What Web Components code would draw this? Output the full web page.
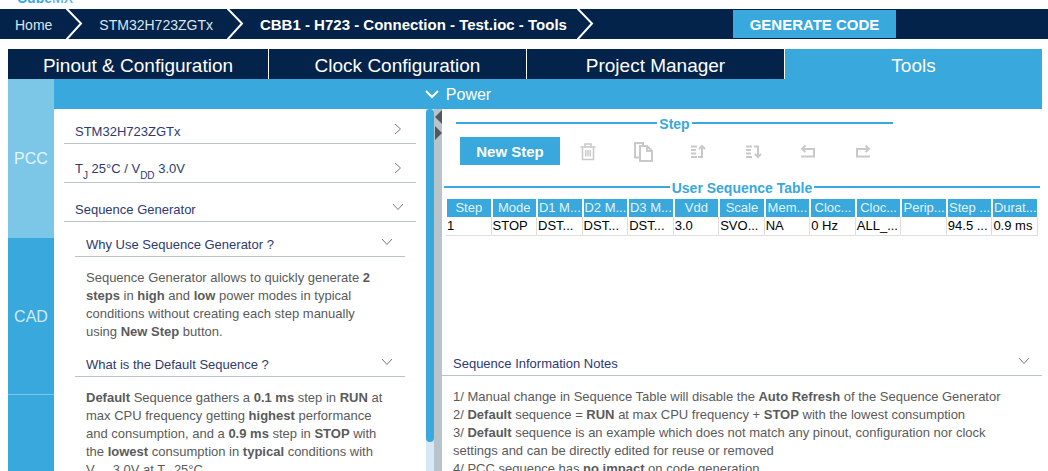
<!DOCTYPE html>
<html lang="en">
<head>
<meta charset="utf-8">
<title>CBB1 - H723 - Connection - Test.ioc - Tools</title>
<style>
  html, body { margin: 0; height: 100%; }
  body {
    --blue: #38a8dd;
    --light: #7cc7e8;
    --navy: #03234b;
    --line: #b9c4ca;
    --ink: #2d3a70;
    overflow: hidden;
    background: #fff;
    color: #5a5a5c;
    font: 13px/18px "Liberation Sans", Arial, sans-serif;
  }
  sub { font-size: 10px; line-height: 8px; vertical-align: -6px; }
</style>
</head>
<body>
<cube-app>
  <cube-brand slot="top"></cube-brand>
  <crumb-bar slot="top">
    <crumb-item>Home</crumb-item>
    <crumb-item>STM32H723ZGTx</crumb-item>
    <crumb-item current>CBB1 - H723 - Connection - Test.ioc - Tools</crumb-item>
    <generate-button slot="action">GENERATE CODE</generate-button>
  </crumb-bar>
  <tab-strip slot="tabs">
    <tab-item>Pinout &amp; Configuration</tab-item>
    <tab-item>Clock Configuration</tab-item>
    <tab-item>Project Manager</tab-item>
    <tab-item selected>Tools</tab-item>
  </tab-strip>
  <side-nav slot="side">
    <side-item selected>PCC</side-item>
    <side-item>CAD</side-item>
    <side-item></side-item>
  </side-nav>
  <power-bar slot="bar">Power</power-bar>
  <scroll-pane slot="left">
    <fold-item class="first"><span slot="title">STM32H723ZGTx</span></fold-item>
    <fold-item><span slot="title">T<sub>J</sub> 25°C / V<sub>DD</sub> 3.0V</span></fold-item>
    <fold-item open>
      <span slot="title">Sequence Generator</span>
      <fold-item open nested>
        <span slot="title">Why Use Sequence Generator ?</span>
        <text-block>Sequence Generator allows to quickly generate <b>2</b><br><b>steps</b> in <b>high</b> and <b>low</b> power modes in typical<br>conditions without creating each step manually<br>using <b>New Step</b> button.</text-block>
      </fold-item>
      <fold-item open nested>
        <span slot="title">What is the Default Sequence ?</span>
        <text-block><b>Default</b> Sequence gathers a <b>0.1 ms</b> step in <b>RUN</b> at<br>max CPU frequency getting <b>highest</b> performance<br>and consumption, and a <b>0.9 ms</b> step in <b>STOP</b> with<br>the <b>lowest</b> consumption in <b>typical</b> conditions with<br>V<sub>DD</sub> 3.0V at T<sub>J</sub> 25°C.</text-block>
      </fold-item>
    </fold-item>
  </scroll-pane>
  <split-bar slot="split"></split-bar>
  <step-panel slot="right"></step-panel>
  <rule-title slot="right">User Sequence Table</rule-title>
  <sequence-table slot="right"></sequence-table>
  <fold-item slot="right" open wide>
    <span slot="title">Sequence Information Notes</span>
    <text-block>1/ Manual change in Sequence Table will disable the <b>Auto Refresh</b> of the Sequence Generator<br>2/ <b>Default</b> sequence = <b>RUN</b> at max CPU frequency + <b>STOP</b> with the lowest consumption<br>3/ <b>Default</b> sequence is an example which does not match any pinout, configuration nor clock<br>settings and can be directly edited for reuse or removed<br>4/ PCC sequence has <b>no impact</b> on code generation</text-block>
  </fold-item>
</cube-app>

<script>
const define = (name, css, html, setup) => {
  const template = document.createElement('template');
  template.innerHTML = `<style>*{box-sizing:border-box}button{margin:0;padding:0;border:0;background:none;color:inherit;font:inherit;cursor:pointer}${css}</style>${html}`;
  customElements.define(name, class extends HTMLElement {
    constructor() {
      super();
      this.attachShadow({ mode: 'open' }).append(template.content.cloneNode(true));
    }
    connectedCallback() { if (setup) setup(this, this.shadowRoot); }
  });
};

define('cube-app', `
  :host { display: flex; flex-direction: column; height: 100vh; }
  .work { flex: 1; min-height: 0; display: flex; flex-direction: column; margin: 10px 6px 0 8px; }
  .body { flex: 1; min-height: 0; display: grid; grid-template: 30px minmax(0, 1fr) / 46px minmax(0, 372px) 8px 8px minmax(0, 606fr); }
  .side { grid-row: 1 / 3; display: grid; overflow: hidden; background: var(--blue); }
  .bar { grid-column: 2 / 6; display: grid; }
  .left { grid-column: 2 / 4; display: grid; min-height: 0; }
  .split { display: grid; }
  .right { min-width: 0; overflow: hidden; display: flex; flex-direction: column; }
  ::slotted(rule-title) { margin: 14px 2px 0; }
  ::slotted(sequence-table) { margin: 2px 4px 0 4px; height: 154px; flex: none; }`,
  `<slot name="top"></slot>
   <main class="work"><slot name="tabs"></slot>
     <div class="body">
       <div class="side"><slot name="side"></slot></div>
       <div class="bar"><slot name="bar"></slot></div>
       <div class="left"><slot name="left"></slot></div>
       <div class="split"><slot name="split"></slot></div>
       <div class="right"><slot name="right"></slot></div>
     </div>
   </main>`);

define('cube-brand', `
  :host { display: flex; flex: none; align-items: flex-end; height: 9px; overflow: hidden; padding: 0 17px; color: var(--blue); }
  span { font-size: 14px; line-height: 16px; padding-bottom: 3px; }`,
  `<span><b>Cube</b>MX</span>`);

define('crumb-bar', `
  :host { display: flex; flex: none; height: 30px; background: var(--navy); color: #fff; }
  nav { display: flex; flex: 1 0 0; }
  .action { display: flex; flex: none; padding: 1px 152px 1px 0; }`,
  `<nav><slot></slot></nav><div class="action"><slot name="action"></slot></div>`);

define('crumb-item', `
  :host { display: flex; align-items: center; font-size: 14px; color: #dbe5ee; white-space: nowrap; }
  a { padding: 2px 14px 0 15px; color: inherit; text-decoration: none; }
  :host([current]) { font-size: 15px; font-weight: bold; color: #fff; }
  :host([current]) a { padding-right: 10px; }
  svg { display: block; }`,
  `<a href="#"><slot></slot></a><svg width="18" height="30" viewBox="0 0 18 30" fill="none" stroke="#fff" stroke-width="2"><path d="M0 -1 15 14.500 0 31"/></svg>`);

define('generate-button', `
  :host { display: grid; }
  button { padding: 2px 16px 0; min-width: 163px; background: var(--blue); color: #fff; font-size: 15px; font-weight: bold; white-space: nowrap; }`,
  `<button type="button"><slot></slot></button>`);

define('tab-strip', `
  :host { display: grid; flex: none; height: 30px; grid-template-columns: 261fr 258fr 258fr 257fr; }`,
  `<slot></slot>`);

define('tab-item', `
  :host { display: grid; background: var(--navy); border-right: 1px solid #fff; color: #fff; font-size: 19px; }
  :host([selected]) { background: var(--blue); border: 0; }
  button { padding-top: 3px; white-space: nowrap; }`,
  `<button type="button"><slot></slot></button>`);

define('side-nav', `:host { display: flex; flex-direction: column; min-height: 0; }`, `<slot></slot>`);

define('side-item', `
  :host { display: grid; box-sizing: border-box; flex: none; height: 157px; border-bottom: 1px solid var(--light); color: #cfeaf7; font-size: 16px; }
  :host([selected]) { background: var(--light); height: 159px; color: #e4f5fc; }
  button { padding-top: 2px; }`,
  `<button type="button" aria-label="Tool"><slot></slot></button>`,
  (el, root) => { if (el.textContent) root.querySelector('button').removeAttribute('aria-label'); });

define('power-bar', `
  :host { display: grid; background: var(--blue); color: #fff; font-size: 16px; }
  button { display: flex; align-items: center; justify-content: center; gap: 7px; padding: 2px 180px 0 0; }`,
  `<button type="button"><svg width="14" height="10" fill="none" stroke="#fff" stroke-width="2"><path d="M1 1 7 7 13 1"/></svg><slot></slot></button>`);

define('scroll-pane', `
  :host { display: flex; min-height: 0; }
  .content { flex: 1; overflow: hidden; padding: 0 10px; }
  .track { width: 8px; background: #d6e7f5; }
  .thumb { height: 92%; border-radius: 4px; background: var(--blue); }`,
  `<div class="content"><slot></slot></div><div class="track"><div class="thumb"></div></div>`);

define('split-bar', `
  :host { display: flex; flex-direction: column; gap: 2px; background: var(--line); padding-top: 1px; }
  svg { display: block; flex: none; }`,
  `<svg width="8" height="14" fill="#54585c"><path d="M8 0V14L1 7z"/></svg><svg width="8" height="14" fill="#54585c"><path d="M1 0V14L8 7z"/></svg>`);

define('fold-item', `
  :host { display: block; flex: none; }
  button { display: flex; width: 100%; align-items: flex-end; justify-content: space-between; height: 39px; padding: 0 12px 2px 11px; border-bottom: 1px solid var(--line); color: var(--ink); text-align: left; white-space: nowrap; }
  :host(.first) button { height: 35px; }
  :host([nested]) { padding: 0 11px; }
  :host([nested]) button { height: 35px; }
  :host([wide]) button { height: 23px; }
  svg { display: none; margin-bottom: 6px; fill: none; stroke: #77797b; stroke-width: 1; }
  :host([open]) .down, :host(:not([open])) .right { display: block; }
  .right { margin-right: 2px; }`,
  `<button type="button"><slot name="title"></slot><svg class="right" width="8" height="12"><path d="M1 1 6.500 6 1 11"/></svg><svg class="down" width="12" height="12"><path d="M1 3 6 8.500 11 3"/></svg></button><slot></slot>`);

define('text-block', `
  :host { display: block; padding: 12px 0 1px 11px; white-space: nowrap; }`, `<slot></slot>`);

define('rule-title', `
  :host { display: flex; align-items: center; gap: 2px; height: 18px; color: var(--blue); font-size: 14px; font-weight: bold; white-space: nowrap; }
  :host::before, :host::after { content: ""; flex: 1; height: 2px; margin-bottom: 2px; background: var(--blue); }`,
  `<slot></slot>`);

define('icon-button', `
  :host { display: block; box-sizing: border-box; width: 20px; height: 24px; padding-top: 2px; color: #c9c9c9; }
  button { display: block; }
  svg { display: block; fill: none; stroke: currentColor; stroke-width: 2; }`,
  `<button type="button"></button>`,
  (el, root) => {
    const shapes = {
      'Delete step': '<path stroke-width="1.500" d="M2.500 6H17.500M7 6V3H13V6M4.500 6V18.500H15.500V6M7.700 9V15.500M10 9V15.500M12.300 9V15.500"/>',
      'Duplicate step': '<path d="M6 16.500H2V2H10V4M7 5H14L19 10V20H7zM14 5V10H19"/>',
      'Move step up': '<path d="M3 5.500H9M3 9H8M3 12.500H8M3 16H9M10 16H14V5M11 8 14 5 17 8"/>',
      'Move step down': '<path d="M3 5.500H9M3 9H8M3 12.500H8M3 16H9M11 5.500H15V16M12 13 15 16 18 13"/>',
      'Undo': '<path d="M4 8H16V15.500H3M7.500 4.500 4 8 7.500 11"/>',
      'Redo': '<path d="M16 8H4V15.500H17M12.500 4.500 16 8 12.500 11"/>'
    };
    const button = root.querySelector('button');
    const name = el.getAttribute('name');
    button.setAttribute('aria-label', name);
    button.innerHTML = `<svg width="20" height="22">${shapes[name]}</svg>`;
  });

define('step-panel', `
  :host { display: block; flex: none; padding: 6px 149px 0 14px; }
  .tools { display: flex; align-items: center; gap: 35px; margin: 4px 0 0 4px; }
  .new { width: 100px; height: 28px; margin-right: -17px; padding-top: 2px; background: var(--blue); color: #fff; font-size: 15px; font-weight: bold; }`,
  `<rule-title>Step</rule-title><div class="tools"><button class="new" type="button">New Step</button>${
    ['Delete step', 'Duplicate step', 'Move step up', 'Move step down', 'Undo', 'Redo'].map(n => `<icon-button name="${n}"></icon-button>`).join('')}</div>`);

const columns = [['Step', '1'], ['Mode', 'STOP'], ['D1 M...', 'DST...'], ['D2 M...', 'DST...'], ['D3 M...', 'DST...'], ['Vdd', '3.0'], ['Scale', 'SVO...'], ['Mem...', 'NA'], ['Cloc...', '0 Hz'], ['Cloc...', 'ALL_...'], ['Perip...', ''], ['Step ...', '94.5 ...'], ['Durat...', '0.9 ms']];
define('sequence-table', `
  :host { display: block; }
  table { width: 100%; table-layout: fixed; border-collapse: separate; border-spacing: 0; }
  th, td { height: 18px; padding: 0; overflow: hidden; white-space: nowrap; font-size: 13px; line-height: 18px; }
  th { border-left: 1px solid #fff; border-right: 1px solid #fff; background: var(--blue); color: #e2f3fb; font-weight: normal; text-align: center; }
  td { height: 19px; padding-left: 1px; border-right: 1px solid #dedede; border-bottom: 1px solid #dedede; color: #000; }`,
  `<table><thead><tr>${columns.map(c => `<th scope="col">${c[0]}</th>`).join('')}</tr></thead><tbody><tr>${columns.map(c => `<td>${c[1]}</td>`).join('')}</tr></tbody></table>`);
</script>
</body>
</html>
